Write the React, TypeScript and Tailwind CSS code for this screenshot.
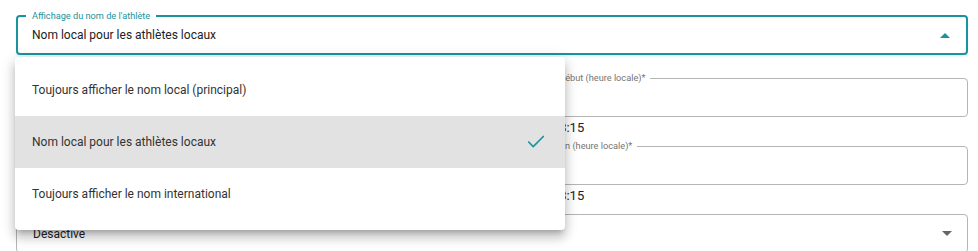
import React from 'react';
import { Check } from 'lucide-react';

const options = [
  'Toujours afficher le nom local (principal)',
  'Nom local pour les athlètes locaux',
  'Toujours afficher le nom international',
];

const TimeField = ({ label, helper }: { label?: string; helper?: string }) => (
  <div className="flex flex-col">
    <div className="relative h-[39px] rounded border border-[#b5b5b5]">
      {label && (
        <span className="absolute -top-[7px] left-[15px] bg-white px-[5px] text-[9.2px] leading-[12px] text-[#757575]">
          {label}
        </span>
      )}
    </div>
    <div className="h-[29px] pt-[3px] text-[13px] leading-[16px] text-[#222]">{helper}</div>
  </div>
);

export default function App() {
  const selected = 1;

  return (
    <div className="relative h-[251px] w-[978px] overflow-hidden bg-white font-['Roboto',sans-serif]">
      <div className="flex flex-col pl-4 pr-[10px] pt-[15px]">
        {/* champ ouvert */}
        <div className="relative flex h-10 items-center rounded border-2 border-[#1b939c] pl-[14px] pr-[16px] shadow-[0_2px_2px_rgba(160,240,250,0.35)]">
          <span className="absolute -top-[7px] left-[8px] bg-white px-[6px] text-[9.2px] leading-[12px] text-[#1b939c]">
            Affichage du nom de l'athlète
          </span>
          <span className="flex-1 text-[12px] text-[#222]">Nom local pour les athlètes locaux</span>
          <svg width="10" height="5" viewBox="0 0 10 5">
            <path d="M0 5 L5 0 L10 5 Z" fill="#1b939c" />
          </svg>
        </div>

        <div className="mt-[23px] grid grid-cols-2 gap-4">
          <div className="flex flex-col">
            <TimeField />
            <TimeField />
          </div>
          <div className="flex flex-col">
            <TimeField label="Heure de début (heure locale)*" helper="En UTC : 13:15" />
            <TimeField label="Heure de fin (heure locale)*" helper="En UTC : 13:15" />
          </div>
        </div>

        <div className="relative flex h-[39px] items-center rounded border border-[#b5b5b5] pl-4 pr-[15px]">
          <span className="flex-1 text-[12px] text-[#222]">Désactivé</span>
          <svg width="10" height="5" viewBox="0 0 10 5">
            <path d="M0 0 L5 5 L10 0 Z" fill="#666" />
          </svg>
        </div>
      </div>

      {/* liste déroulante */}
      <div className="absolute left-[15px] top-[57px] w-[550px] rounded bg-white pb-[10px] pt-[7px] shadow-[0_5px_5px_-3px_rgba(0,0,0,0.2),0_8px_10px_1px_rgba(0,0,0,0.14),0_3px_14px_2px_rgba(0,0,0,0.12)]">
        {options.map((opt, i) => (
          <div
            key={opt}
            className={`flex h-[52px] items-center justify-between pl-[17px] pr-[18px] text-[12px] text-[#333] ${
              i === selected ? 'bg-[#e2e2e2]' : ''
            }`}
          >
            <span>{opt}</span>
            {i === selected && <Check size={22} strokeWidth={1.8} color="#1b939c" />}
          </div>
        ))}
      </div>
    </div>
  );
}
